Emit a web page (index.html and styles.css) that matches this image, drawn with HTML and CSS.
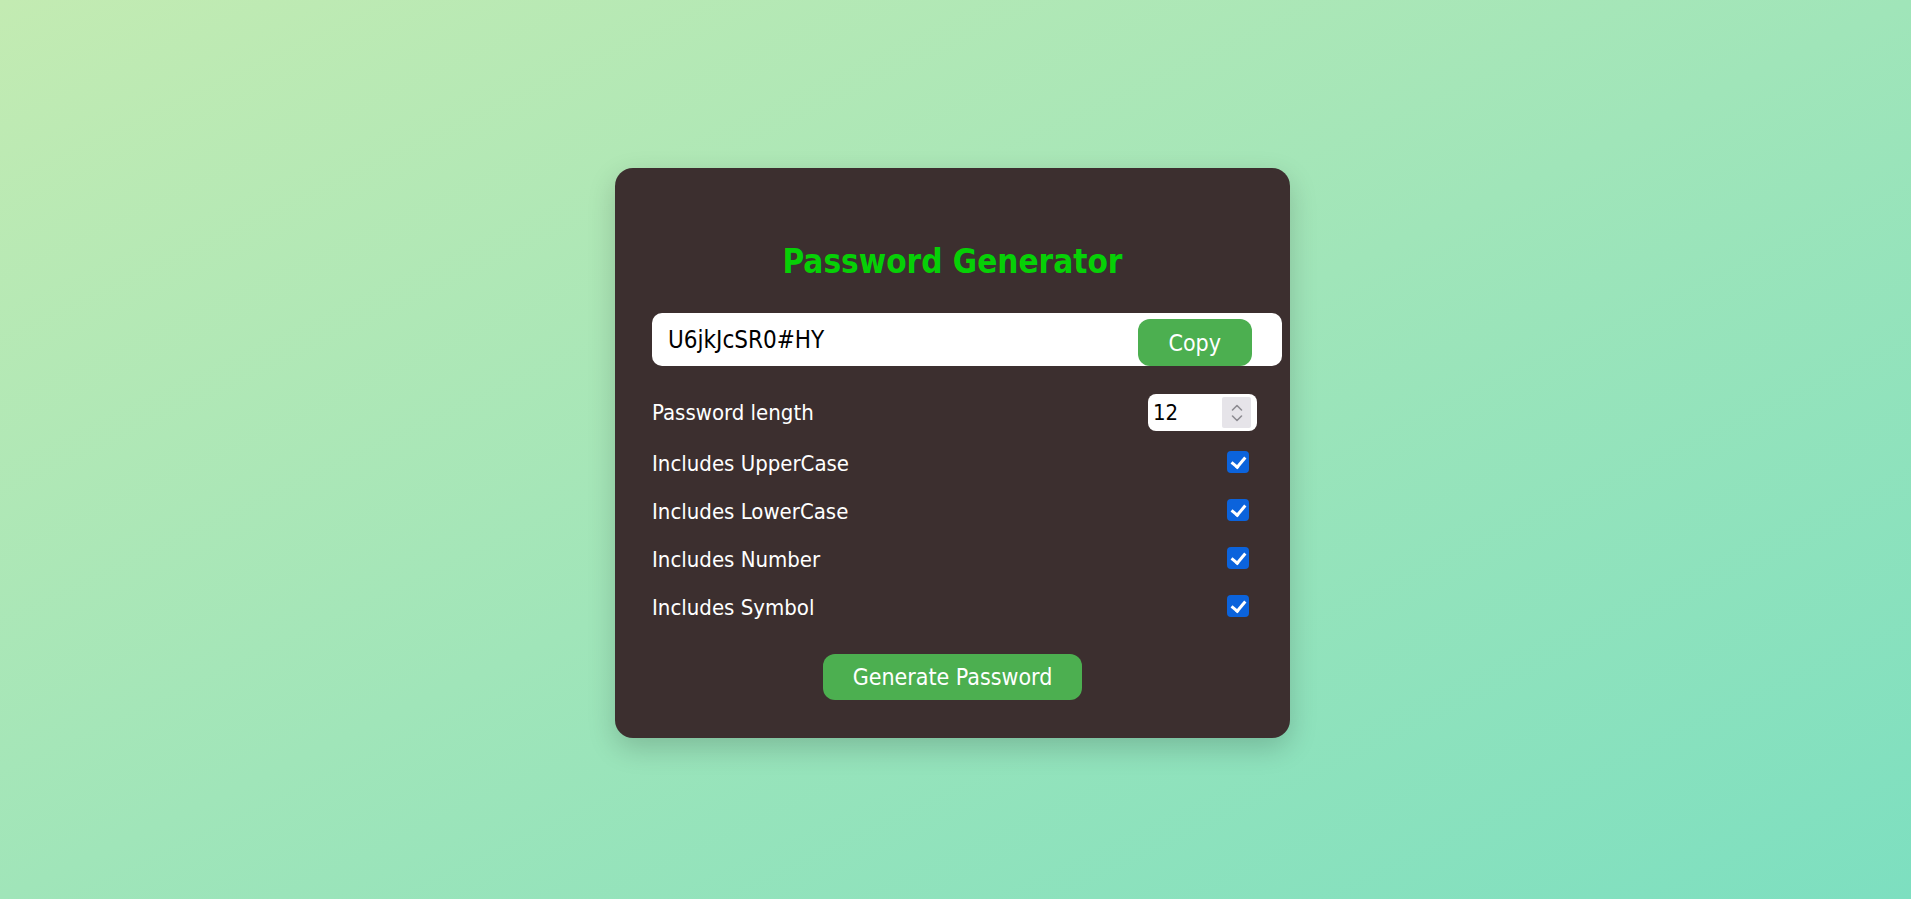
FILE: index.html
```html
<!DOCTYPE html>
<html lang="en">
<head>
<meta charset="utf-8">
<title>Password Generator</title>
<link rel="stylesheet" href="styles.css">
</head>
<body>
  <main class="card">
    <h1 class="title">Password Generator</h1>
    <div class="output">
      <input class="output-text" type="text" value="U6jkJcSR0#HY" readonly>
      <button class="btn btn-copy" type="button">Copy</button>
    </div>
    <div class="options">
      <div class="row row-length">
        <label class="row-label" for="len">Password length</label>
        <div class="number">
          <input class="number-input" id="len" type="number" value="12" min="4" max="50">
          <span class="spinner">
            <svg width="12" height="22" viewBox="0 0 12 22" aria-hidden="true">
              <path d="M1.5 8 L6 3.5 L10.5 8" fill="none" stroke="#8e8c92" stroke-width="1.6" stroke-linecap="round" stroke-linejoin="round"/>
              <path d="M1.5 14 L6 18.5 L10.5 14" fill="none" stroke="#8e8c92" stroke-width="1.6" stroke-linecap="round" stroke-linejoin="round"/>
            </svg>
          </span>
        </div>
      </div>
      <div class="row">
        <label class="row-label" for="upper">Includes UpperCase</label>
        <input class="check" id="upper" type="checkbox" checked>
      </div>
      <div class="row">
        <label class="row-label" for="lower">Includes LowerCase</label>
        <input class="check" id="lower" type="checkbox" checked>
      </div>
      <div class="row">
        <label class="row-label" for="num">Includes Number</label>
        <input class="check" id="num" type="checkbox" checked>
      </div>
      <div class="row">
        <label class="row-label" for="sym">Includes Symbol</label>
        <input class="check" id="sym" type="checkbox" checked>
      </div>
    </div>
    <div class="actions">
      <button class="btn btn-generate" type="button">Generate Password</button>
    </div>
  </main>
</body>
</html>
```

FILE: styles.css
```css
* {
  box-sizing: border-box;
}

html, body {
  margin: 0;
  height: 100%;
}

body {
  min-height: 100vh;
  display: flex;
  align-items: center;
  justify-content: center;
  padding: 7px 6px 0 0;
  background: linear-gradient(to bottom right, #c3ebb2, #7ddfc0);
  font-family: "DejaVu Sans Condensed", "DejaVu Sans", sans-serif;
  color: #ffffff;
}

.card {
  width: 675px;
  background: #3c2f2f;
  border-radius: 18px;
  padding: 75px 37px 38px 37px;
  box-shadow: 0 10px 28px rgba(0, 0, 0, 0.18);
}

.title {
  margin: 0;
  font-size: 33px;
  font-weight: bold;
  line-height: 37px;
  text-align: center;
  color: #06d006;
}

.output {
  margin-top: 33px;
  width: calc(100% + 29px);
  height: 53px;
  background: #ffffff;
  border-radius: 10px;
  display: flex;
  align-items: center;
  padding: 0 30px 0 16px;
  overflow: hidden;
}

.output-text {
  flex: 1;
  min-width: 0;
  border: none;
  outline: none;
  background: transparent;
  padding: 0;
  font-family: inherit;
  font-size: 24px;
  color: #000000;
}

.btn {
  border: none;
  background: #4caf50;
  color: #ffffff;
  font-family: inherit;
  font-size: 23px;
  border-radius: 12px;
  cursor: pointer;
}

.btn-copy {
  align-self: flex-end;
  height: 47px;
  padding: 0 31px;
}

.options {
  margin-top: 28px;
  display: flex;
  flex-direction: column;
  gap: 18px;
}

.row {
  display: flex;
  align-items: center;
  justify-content: space-between;
  height: 30px;
}

.row-length {
  height: 37px;
}

.row-label {
  font-size: 22px;
  line-height: 26px;
  color: #ffffff;
}

.number {
  width: 109px;
  height: 37px;
  margin-right: -4px;
  background: #ffffff;
  border-radius: 8px;
  display: flex;
  align-items: center;
  padding: 3px 6px 3px 5px;
}

.number-input {
  flex: 1;
  min-width: 0;
  border: none;
  outline: none;
  background: transparent;
  padding: 0;
  font-family: inherit;
  font-size: 22px;
  color: #000000;
  -moz-appearance: textfield;
}

.number-input::-webkit-outer-spin-button,
.number-input::-webkit-inner-spin-button {
  -webkit-appearance: none;
  margin: 0;
}

.spinner {
  width: 29px;
  height: 31px;
  background: #e6e4e9;
  border-radius: 2px;
  display: flex;
  align-items: center;
  justify-content: center;
}

.check {
  -webkit-appearance: none;
  appearance: none;
  position: relative;
  width: 22px;
  height: 22px;
  margin: 0 4px 4px 0;
  border-radius: 4px;
  background: #0b63dc;
  cursor: pointer;
}

.check::after {
  content: "";
  position: absolute;
  left: 7px;
  top: 3px;
  width: 6px;
  height: 11px;
  border-right: 3px solid #ffffff;
  border-bottom: 3px solid #ffffff;
  transform: rotate(40deg);
}

.actions {
  margin-top: 31px;
  display: flex;
  justify-content: center;
}

.btn-generate {
  height: 46px;
  padding: 0 30px;
}
```
